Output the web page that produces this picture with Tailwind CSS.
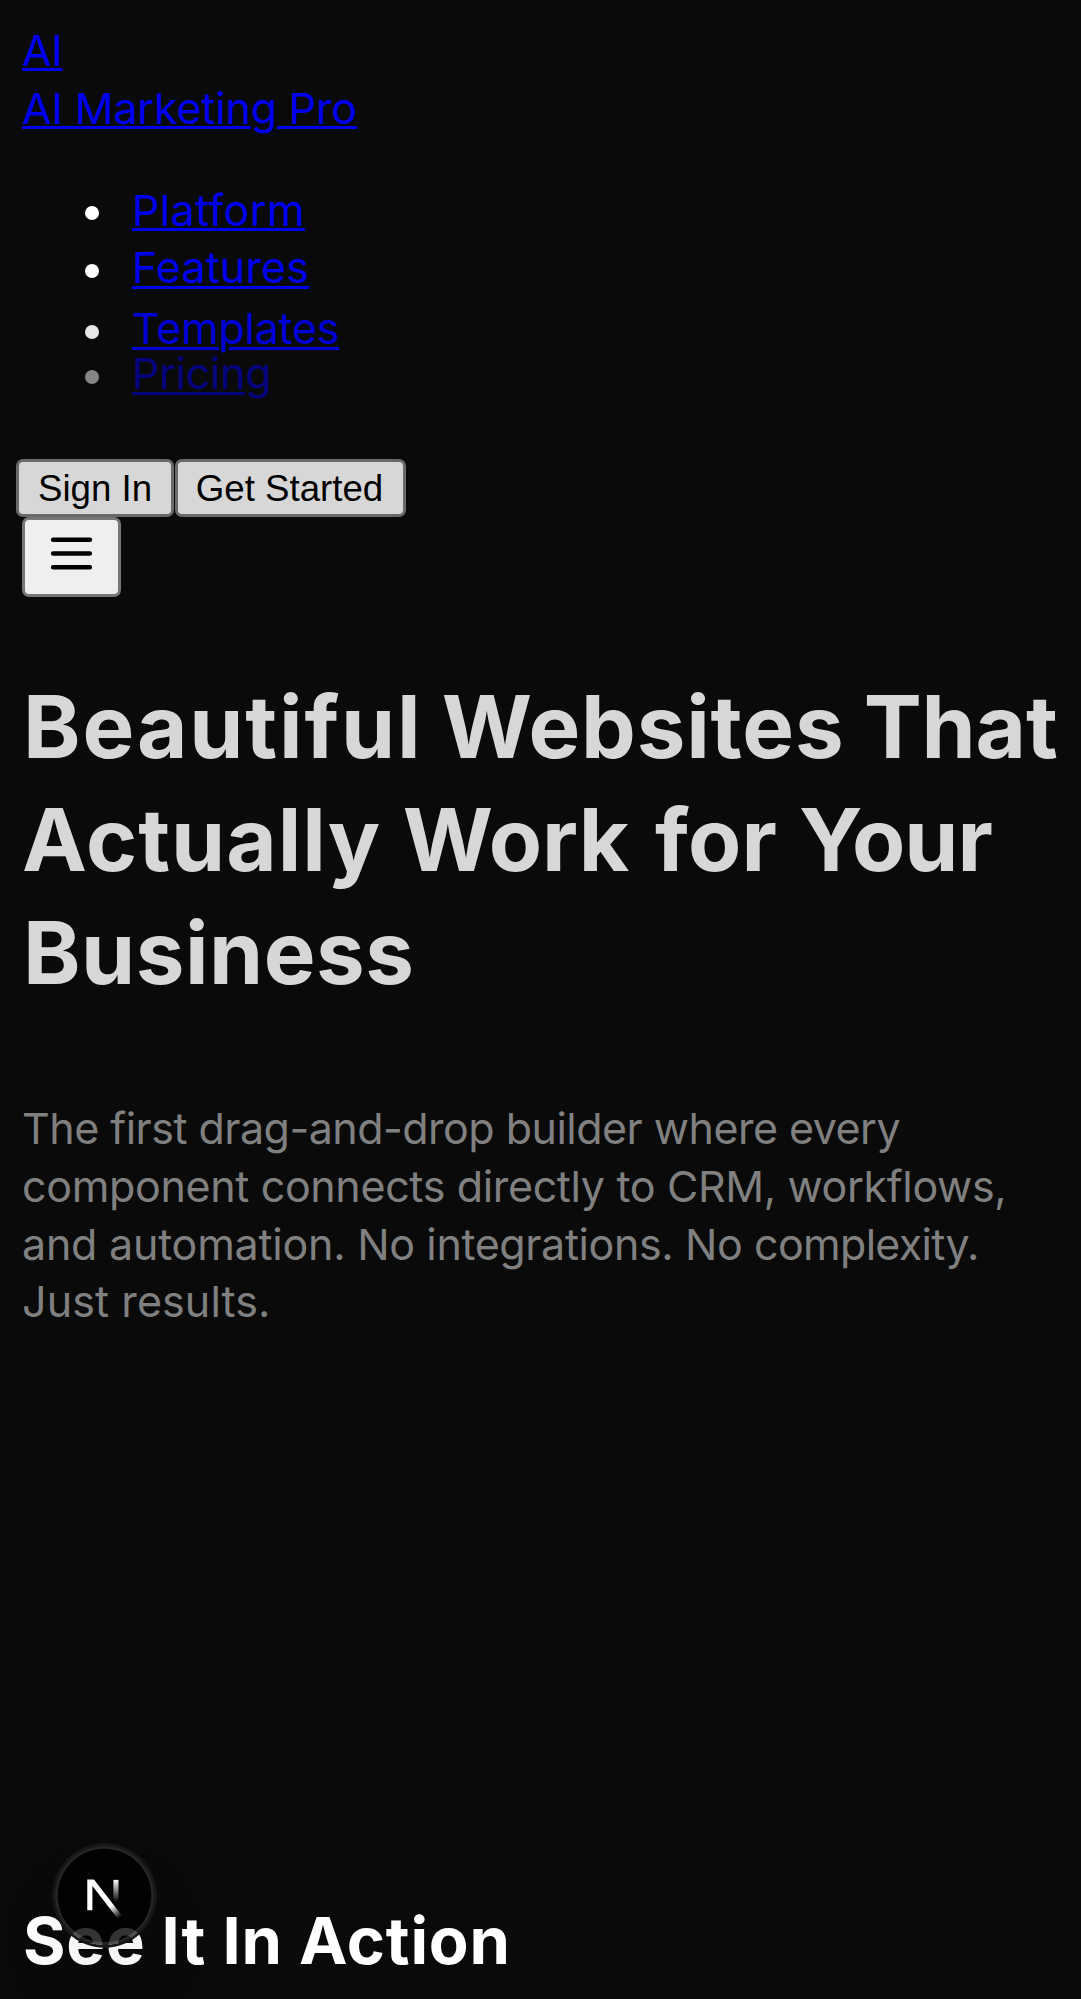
<!DOCTYPE html>
<html lang="en">
<head>
<meta charset="utf-8">
<title>AI Marketing Pro</title>
<script src="https://cdn.jsdelivr.net/npm/@tailwindcss/browser@4"></script>
</head>
<body class="relative h-[1999px] overflow-hidden bg-[#0a0a0a] px-[22px] pt-[21px] font-['Inter',sans-serif] text-[43px] leading-[58px] text-white">
<header>
  <a href="#" class="block w-fit text-[#0000ee] underline decoration-[3px] underline-offset-[2px]">
    <span class="block w-fit tracking-[-0.45px]">AI</span>
    <span class="block w-fit whitespace-nowrap tracking-[-0.19px]">AI Marketing Pro</span>
  </a>
  <ul class="mt-[44px] text-[#0000ee]">
    <li class="flex h-[57px] pl-[63px]"><span class="mt-[25px] mr-[33px] size-[14px] rounded-full bg-white"></span><a href="#" class="tracking-[0.37px] underline decoration-[3px] underline-offset-[2px]">Platform</a></li>
    <li class="flex h-[61px] pl-[63px]"><span class="mt-[26px] mr-[33px] size-[14px] rounded-full bg-white"></span><a href="#" class="tracking-[0.12px] underline decoration-[3px] underline-offset-[3px]">Features</a></li>
    <li class="flex h-[45px] pl-[63px] leading-[58px] opacity-90"><span class="mt-[26px] mr-[33px] size-[14px] rounded-full bg-white"></span><a href="#" class="tracking-[-0.24px] underline decoration-[3px] underline-offset-[3px]">Templates</a></li>
    <li class="flex h-[58px] pl-[63px] opacity-50"><span class="mt-[26px] mr-[33px] size-[14px] rounded-full bg-white"></span><a href="#" class="tracking-[-0.3px] underline decoration-[3px] underline-offset-[3px]">Pricing</a></li>
  </ul>
  <div class="mt-[57px] -ml-[6px] flex gap-px font-['Liberation_Sans',Arial,sans-serif] text-[36.667px] leading-[50px] text-black">
    <button class="h-[58px] w-[158px] rounded-[7px] border-3 border-[#6a6a6a] bg-[#d7d7d7] pt-[2px] whitespace-nowrap">Sign In</button>
    <button class="h-[58px] w-[231px] rounded-[7px] border-3 border-[#6a6a6a] bg-[#d7d7d7] pt-[2px] pr-[2px] whitespace-nowrap">Get Started</button>
  </div>
  <button aria-label="Menu" class="flex h-[80px] w-[99px] justify-center rounded-[7px] border-3 border-[#767676] bg-[#efefef] pt-[6px] text-black">
    <svg class="size-[55px]" viewBox="0 0 24 24" fill="none" stroke="currentColor" stroke-width="2" stroke-linecap="round"><path d="M4 6h16M4 12h16M4 18h16"/></svg>
  </button>
</header>
<main>
  <h1 class="mt-[73px] pl-px text-[87px] leading-[113px] font-bold whitespace-nowrap text-[#d7d7d7]">
    <span class="block tracking-[0.76px] [word-spacing:-2px]"><span class="tracking-[1.86px]">Beautiful</span> Websites <span class="tracking-[-0.2px]">That</span></span>
    <span class="block -ml-px tracking-[1px]">Actually <span class="tracking-[0px]">Work</span> <span class="ml-[4px] tracking-[0.3px]">for</span> <span class="tracking-[-1px]">Your</span></span>
    <span class="block tracking-[0.5px]">Business</span>
  </h1>
  <p class="mt-[91px] leading-[57.75px] whitespace-nowrap text-[#808080]">
    <span class="block tracking-[-0.52px]">The first drag-and-drop builder where every</span>
    <span class="block tracking-[-0.35px]">component connects directly to CRM, workflows,</span>
    <span class="block tracking-[-0.39px]"><span class="tracking-[-0.23px]">and automation. </span>No integrations. No <span class="tracking-[-0.7px]">complexity.</span></span>
    <span class="block tracking-[0.1px]">Just results.</span>
  </p>
  <h2 class="mt-[568px] pl-px text-[65px] leading-[84px] font-bold tracking-[0.8px] whitespace-nowrap">See It In Action</h2>
</main>
<div class="absolute top-[1846px] left-[55px] size-[99px] rounded-full bg-black/80 shadow-[0_0_0_2.75px_#171717,inset_0_0_0_2.75px_rgba(255,255,255,0.14),0_44px_88px_-22px_rgba(0,0,0,0.24)]">
  <svg class="size-[99px]" viewBox="0 0 36 36" fill="none">
    <defs>
      <linearGradient id="diagonal" x1="9.956" y1="11.123" x2="15.478" y2="17.967" gradientUnits="userSpaceOnUse"><stop stop-color="#fff"/><stop offset="0.604" stop-color="#fff" stop-opacity="0"/><stop offset="1" stop-color="#fff" stop-opacity="0"/></linearGradient>
      <linearGradient id="stem" x1="11.82" y1="1.4" x2="11.79" y2="9.625" gradientUnits="userSpaceOnUse"><stop stop-color="#fff"/><stop offset="1" stop-color="#fff" stop-opacity="0"/></linearGradient>
      <clipPath id="crop"><path d="M0 1.4h16v16H0z"/></clipPath>
    </defs>
    <g transform="translate(10.33 10.76)" stroke-width="1.86" clip-path="url(#crop)">
      <path d="M13.3 15.2 2.34 1v11.6" stroke="url(#diagonal)"/>
      <path d="M11.825 1.5v11.6" stroke="url(#stem)"/>
    </g>
    <path d="M11.8 10.1h1.2" stroke="#fff" stroke-opacity="0.12" stroke-width="0.36"/>
  </svg>
</div>
</body>
</html>
